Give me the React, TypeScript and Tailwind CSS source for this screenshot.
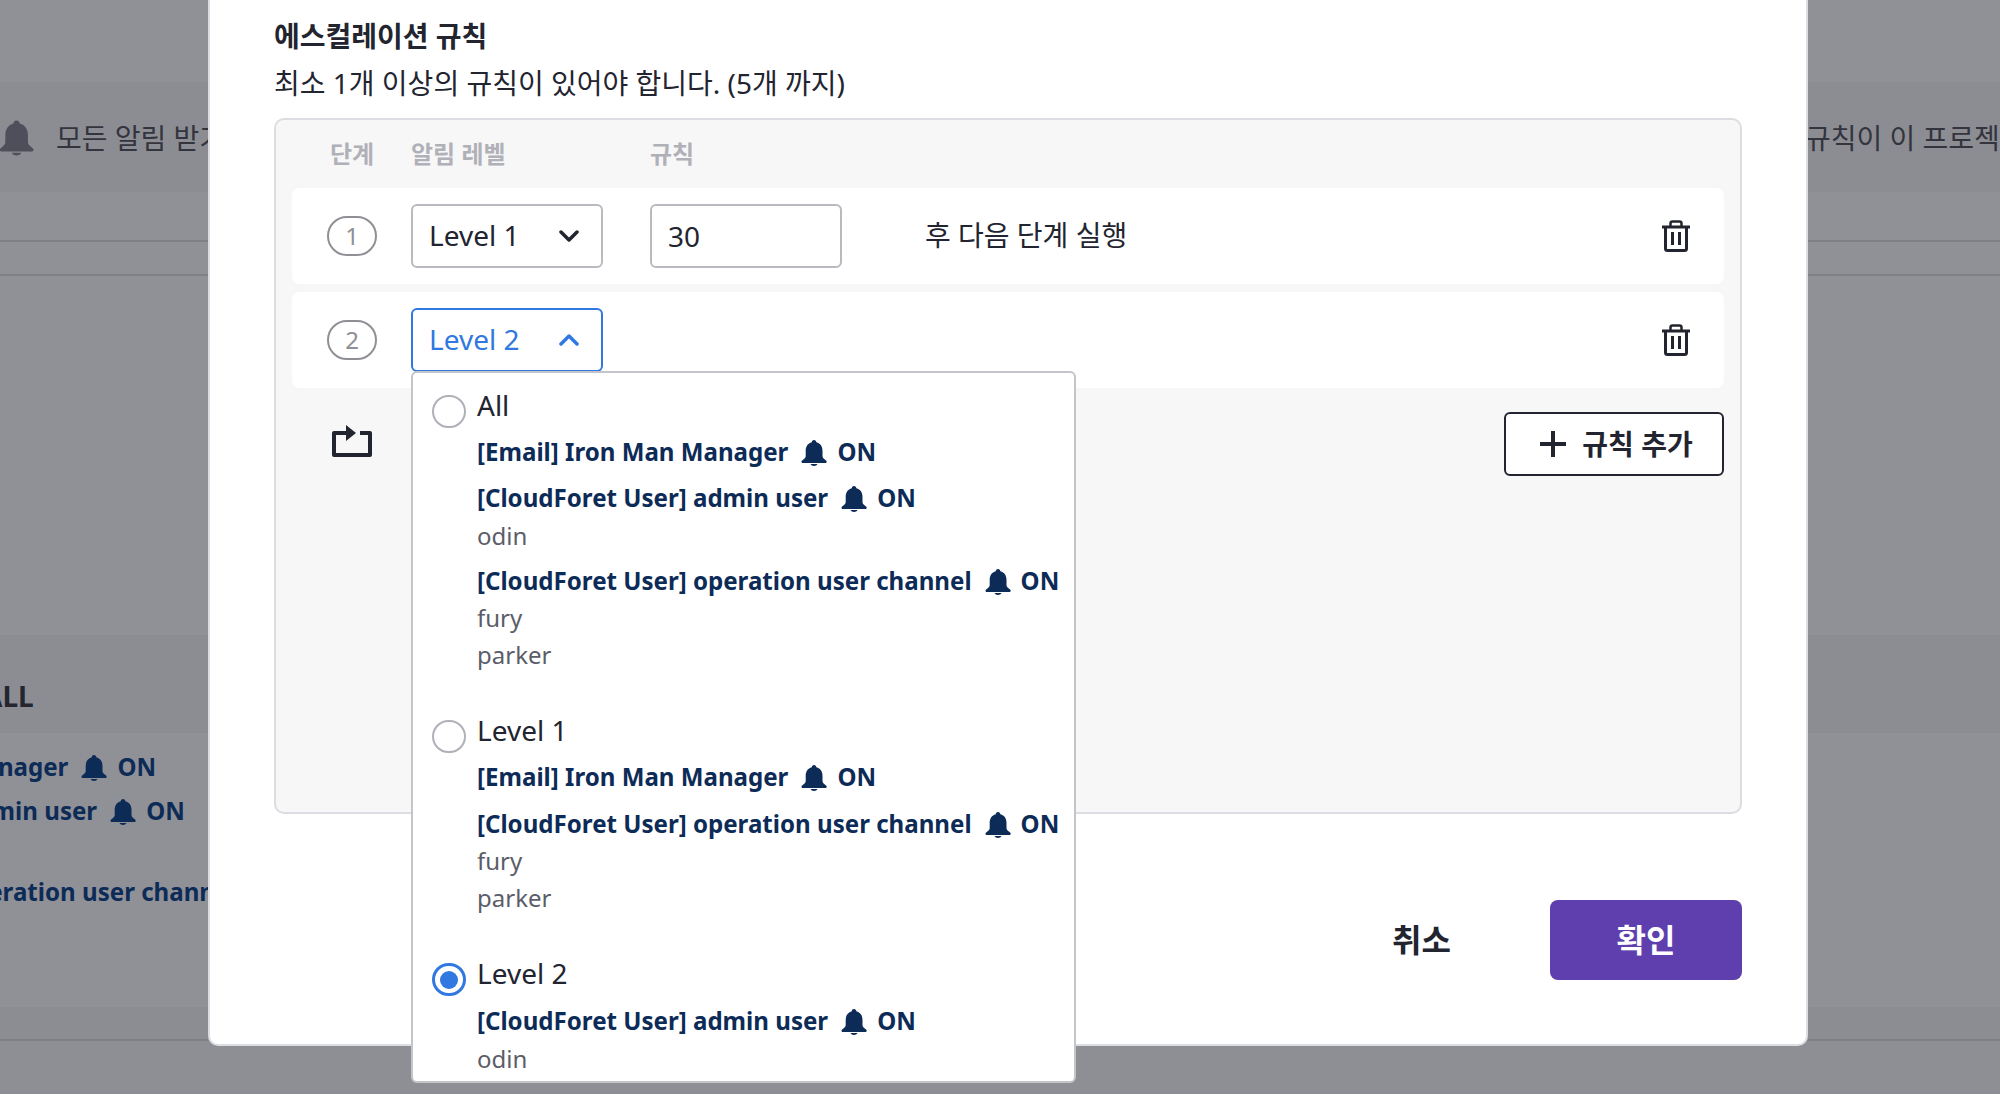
const SANS = 'font-["Noto_Sans","Noto_Sans_CJK_KR",sans-serif]'

function Bell({ className }: { className: string }) {
  return (
    <svg viewBox="0 0 26 26" className={className} fill="currentColor">
      <path d="M13 0c1.400 0 2.300 1 2.400 2.300C19.400 3.400 21.500 6.600 21.500 11v5c0 1.500.9 2.500 2.600 3.800 1.100.8 1.600 1.400 1.600 2 0 .8-.6 1.200-1.500 1.200H2c-.9 0-1.500-.4-1.500-1.200 0-.6.5-1.200 1.600-2 1.700-1.300 2.600-2.300 2.600-3.800v-5c0-4.400 2.100-7.600 6.100-8.700C10.700 1 11.600 0 13 0z" />
      <path d="M9.500 24h7c-.5 1.300-2 2-3.500 2s-3-.7-3.500-2z" />
    </svg>
  )
}

function Trash() {
  return (
    <svg viewBox="0 0 28 32" className="w-[28px] h-[32px]" fill="none" stroke="#22242f" strokeWidth="3">
      <path d="M0 7h28" />
      <path d="M8.500 6V3.500C8.500 2.200 9.300 1.500 10.500 1.500h7c1.200 0 2 .7 2 2V6" strokeWidth="2.500" />
      <path d="M3.500 7v21.500c0 1.200.8 2 2 2h17c1.200 0 2-.8 2-2V7" />
      <path d="M10.500 12v13M17.500 12v13" />
    </svg>
  )
}

function Chevron({ up }: { up?: boolean }) {
  return (
    <svg viewBox="0 0 20 12" className="w-[20px] h-[12px]" fill="none" stroke="currentColor" strokeWidth="3.500" strokeLinecap="round" strokeLinejoin="round">
      <path d={up ? 'M2 10l8-8 8 8' : 'M2 2l8 8 8-8'} />
    </svg>
  )
}

function Repeat() {
  return (
    <svg viewBox="0 0 40 32" className="w-[40px] h-[32px]">
      <path d="M15 8H2v22h36V8H28" fill="none" stroke="#22242f" strokeWidth="4" strokeLinejoin="round" />
      <path d="M14 0l10 8-10 8z" fill="#22242f" />
    </svg>
  )
}

function Member({ name, ml }: { name: string; ml?: string }) {
  return (
    <div className={`flex items-center whitespace-nowrap text-[24.1px] font-bold leading-[36px] text-[#0d2b57] ${ml ?? ''}`}>
      <span>{name}</span>
      <Bell className="w-[26px] h-[26px] ml-[13px] mr-[10px] mt-[2px] shrink-0" />
      <span>ON</span>
    </div>
  )
}

function Option({ label, selected, children, className }: { label: string; selected?: boolean; children: React.ReactNode; className: string }) {
  return (
    <div className={`flex ${className}`}>
      {selected ? (
        <div className="w-[34px] h-[33px] mt-[6px] shrink-0 rounded-full border-[3px] border-[#3178e0] flex items-center justify-center">
          <div className="w-[18px] h-[18px] rounded-full bg-[#3178e0]" />
        </div>
      ) : (
        <div className="w-[34px] h-[33px] mt-[6px] shrink-0 rounded-full border-2 border-[#b0b1b8]" />
      )}
      <div className="ml-[11px]">
        <div className="text-[28px] leading-[32px] text-[#22242f] h-[32px]">{label}</div>
        {children}
      </div>
    </div>
  )
}

function Sub({ children }: { children: string }) {
  return <div className="text-[24px] leading-[37px] text-[#5b5d68]">{children}</div>
}

function RuleRow({ step, children, className }: { step: string; children: React.ReactNode; className?: string }) {
  return (
    <div className={`h-[96px] mx-[16px] bg-white rounded-lg flex items-center ${className ?? ''}`}>
      <div className="w-[50px] h-[40px] ml-[35px] rounded-[20px] border-2 border-[#8f9095] flex items-center justify-center text-[24px] text-[#8f9095]">{step}</div>
      <div className="ml-[34px] flex-1 flex items-center h-full">{children}</div>
      <div className="mr-[34px]"><Trash /></div>
    </div>
  )
}

function BackRow({ h, className, children }: { h: string; className?: string; children?: React.ReactNode }) {
  return <div className={`${h} overflow-hidden ${className ?? ''}`}>{children}</div>
}

export default function App() {
  return (
    <div className={`relative w-[2000px] h-[1094px] overflow-hidden bg-[#909196] ${SANS}`}>
      {/* dimmed page behind the modal */}
      <div className="flex flex-col h-full">
        <BackRow h="h-[82px]" />
        <BackRow h="h-[110px]" className="bg-[#8c8d92] flex items-center pt-[2px] text-[28px] text-[#33343e]">
          <Bell className="w-[35px] h-[40px] shrink-0 -ml-[1px] text-[#4e4f5a]" />
          <span className="ml-[22px] whitespace-nowrap">모든 알림 받기</span>
          <span className="ml-auto w-[195px] shrink-0 whitespace-nowrap overflow-hidden">규칙이 이 프로젝트</span>
        </BackRow>
        <BackRow h="h-[50px]" className="border-b-2 border-[#7f8086]" />
        <BackRow h="h-[34px]" className="border-b-2 border-[#7f8086]" />
        <BackRow h="h-[359px]" />
        <BackRow h="h-[98px]" className="bg-[#8c8d92] flex items-center pt-[24px]">
          <span className="-ml-[17px] text-[28px] font-bold text-[#24252f]">ALL</span>
        </BackRow>
        <BackRow h="h-[274px]" className="pt-[16px]">
          <Member name="[Email] Iron Man Manager" ml="-ml-[243px]" />
          <div className="h-[8px]" />
          <Member name="[CloudForet User] admin user" ml="-ml-[254px]" />
          <div className="h-[45px]" />
          <Member name="[CloudForet User] operation user channel" ml="-ml-[258px]" />
        </BackRow>
        <BackRow h="h-[34px]" className="bg-[#8c8d92] border-b-2 border-[#7f8086]" />
        <div className="flex-1 bg-[#8e8f94]" />
      </div>

      {/* modal */}
      <div className="absolute left-[208px] top-0 w-[1600px] h-[1046px] bg-white rounded-b-[10px] border-2 border-t-0 border-[#dcdde2] flex flex-col pl-[64px] pr-[64px]">
        <h2 className="mt-[16px] text-[28px] leading-[40px] font-bold text-[#22242f]">에스컬레이션 규칙</h2>
        <p className="mt-[7px] text-[28px] leading-[40px] text-[#22242f]">최소 1개 이상의 규칙이 있어야 합니다. (5개 까지)</p>

        <div className="mt-[15px] relative h-[696px] bg-[#f7f7f7] border-2 border-[#dcdde2] rounded-[10px] flex flex-col">
          <div className="h-[68px] flex items-center text-[24px] font-bold text-[#b0b1b8]">
            <span className="ml-[54px] w-[81px]">단계</span>
            <span className="w-[239px]">알림 레벨</span>
            <span>규칙</span>
          </div>
          <RuleRow step="1">
            <div className="w-[192px] h-[64px] pl-[16px] pr-[17px] border-2 border-[#b9bac0] rounded-md flex items-center justify-between text-[28px] text-[#22242f]">
              <span className="-mt-[2px]">Level 1</span>
              <span className="mr-[5px]"><Chevron /></span>
            </div>
            <div className="ml-[47px] w-[192px] h-[64px] px-[16px] border-2 border-[#b9bac0] rounded-md flex items-center text-[28px] text-[#22242f]">30</div>
            <span className="ml-[83px] -mt-[2px] text-[28px] text-[#22242f]">후 다음 단계 실행</span>
          </RuleRow>
          <RuleRow step="2" className="mt-[8px]">
            <div className="w-[192px] h-[64px] pl-[16px] pr-[17px] border-2 border-[#3178e0] rounded-md flex items-center justify-between text-[28px] text-[#3178e0]">
              <span className="-mt-[2px]">Level 2</span>
              <span className="mr-[5px]"><Chevron up /></span>
            </div>
          </RuleRow>
          <div className="mt-[24px] flex items-start">
            <div className="ml-[56px] mt-[13px]"><Repeat /></div>
            <button className="ml-auto mr-[16px] w-[220px] h-[64px] pl-[5px] bg-white border-2 border-[#22242f] rounded-md flex items-center justify-center text-[28px] font-bold text-[#22242f]">
              <svg viewBox="0 0 26 26" className="w-[26px] h-[26px] mr-[16px]" fill="#22242f"><path d="M11 0h4v11h11v4H15v11h-4V15H0v-4h11z" /></svg>
              규칙 추가
            </button>
          </div>
        </div>

        <div className="mt-[86px] flex items-center justify-end">
          <button className="mr-[99px] text-[32px] font-bold text-[#22242f]">취소</button>
          <button className="w-[192px] h-[80px] bg-[#5e3fad] rounded-lg text-[32px] font-bold text-white">확인</button>
        </div>
      </div>

      {/* level dropdown, open over the modal */}
      <div className="absolute left-[411px] top-[371px] w-[665px] h-[712px] bg-white border-2 border-[#c4c5ca] rounded-md overflow-hidden">
        <Option label="All" className="ml-[19px] mt-[16px]">
          <div className="mt-[13px]"><Member name="[Email] Iron Man Manager" /></div>
          <div className="mt-[10px]"><Member name="[CloudForet User] admin user" /></div>
          <div className="mt-[1px]"><Sub>odin</Sub></div>
          <div className="mt-[9px]"><Member name="[CloudForet User] operation user channel" /></div>
          <Sub>fury</Sub>
          <Sub>parker</Sub>
        </Option>
        <Option label="Level 1" className="ml-[19px] mt-[41px]">
          <div className="mt-[13px]"><Member name="[Email] Iron Man Manager" /></div>
          <div className="mt-[11px]"><Member name="[CloudForet User] operation user channel" /></div>
          <Sub>fury</Sub>
          <Sub>parker</Sub>
        </Option>
        <Option label="Level 2" selected className="ml-[19px] mt-[41px]">
          <div className="mt-[14px]"><Member name="[CloudForet User] admin user" /></div>
          <div className="mt-[1px]"><Sub>odin</Sub></div>
        </Option>
      </div>
    </div>
  )
}
